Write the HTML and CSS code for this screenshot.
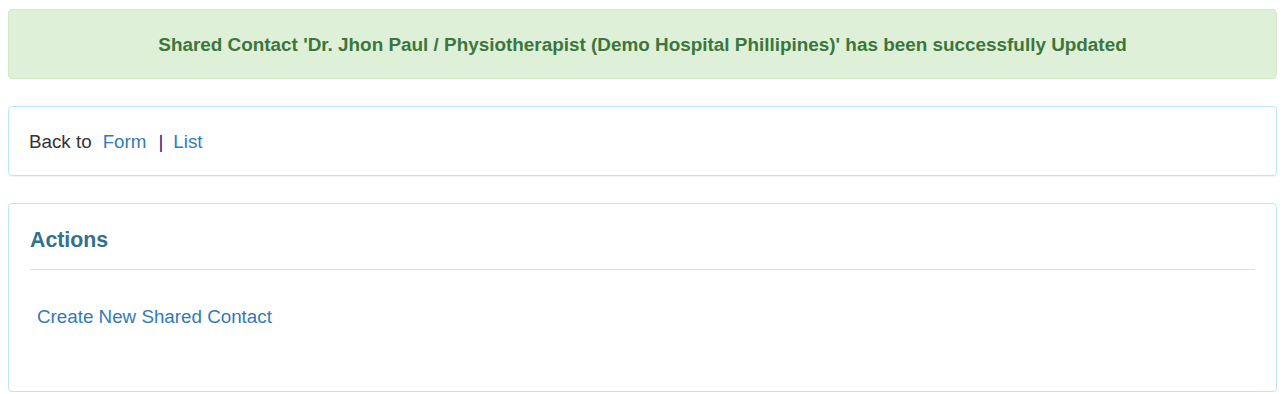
FILE: index.html
```html
<!DOCTYPE html>
<html>
<head>
<meta charset="utf-8">
<link rel="stylesheet" href="styles.css">
</head>
<body>
<div class="page">
  <div class="alert">Shared Contact 'Dr. Jhon Paul / Physiotherapist (Demo Hospital Phillipines)' has been successfully Updated</div>
  <div class="panel back">
    <span class="label">Back to</span>
    <a class="link" href="#">Form</a>
    <span class="sep">|</span>
    <a class="link" href="#">List</a>
  </div>
  <div class="panel actions">
    <h4 class="title">Actions</h4>
    <div class="rule"></div>
    <a class="link create" href="#">Create New Shared Contact</a>
  </div>
</div>
</body>
</html>
```
FILE: styles.css
```css
html, body { margin: 0; padding: 0; background: #fff; }
body { font-family: "Liberation Sans", Arial, sans-serif; color: #333; }
.page { padding: 9px 8px 0 8px; display: flex; flex-direction: column; }
.alert {
  background: #dff0d8;
  border: 1px solid #d6e9c6;
  border-radius: 4px;
  color: #3c763d;
  font-weight: bold;
  font-size: 18.9px;
  text-align: center;
  height: 67px;
  padding-top: 1px;
  line-height: 68px;
  margin-bottom: 27px;
}
.panel {
  border: 1px solid #bce8f1;
  border-radius: 4px;
  box-shadow: 0 1px 1px rgba(0,0,0,0.05);
  padding: 0 21px;
}
.back {
  height: 67px;
  padding-top: 1px;
  padding-left: 20px;
  display: flex;
  align-items: center;
  font-size: 18.8px;
  margin-bottom: 27px;
}
.label { margin-right: 11px; }
.link { color: #337ab7; text-decoration: none; }
.sep { color: #222a88; margin: 0 10px 0 12px; }
.actions {
  height: 187px;
  display: flex;
  flex-direction: column;
}
.title {
  margin: 0;
  padding-top: 24px;
  font-size: 21.3px;
  line-height: 24px;
  color: #31708f;
  font-weight: bold;
}
.rule { height: 1px; background: #bce8f1; margin-top: 17px; }
.create { font-size: 18.8px; margin: 35px 0 0 7px; line-height: 24px; }
```
